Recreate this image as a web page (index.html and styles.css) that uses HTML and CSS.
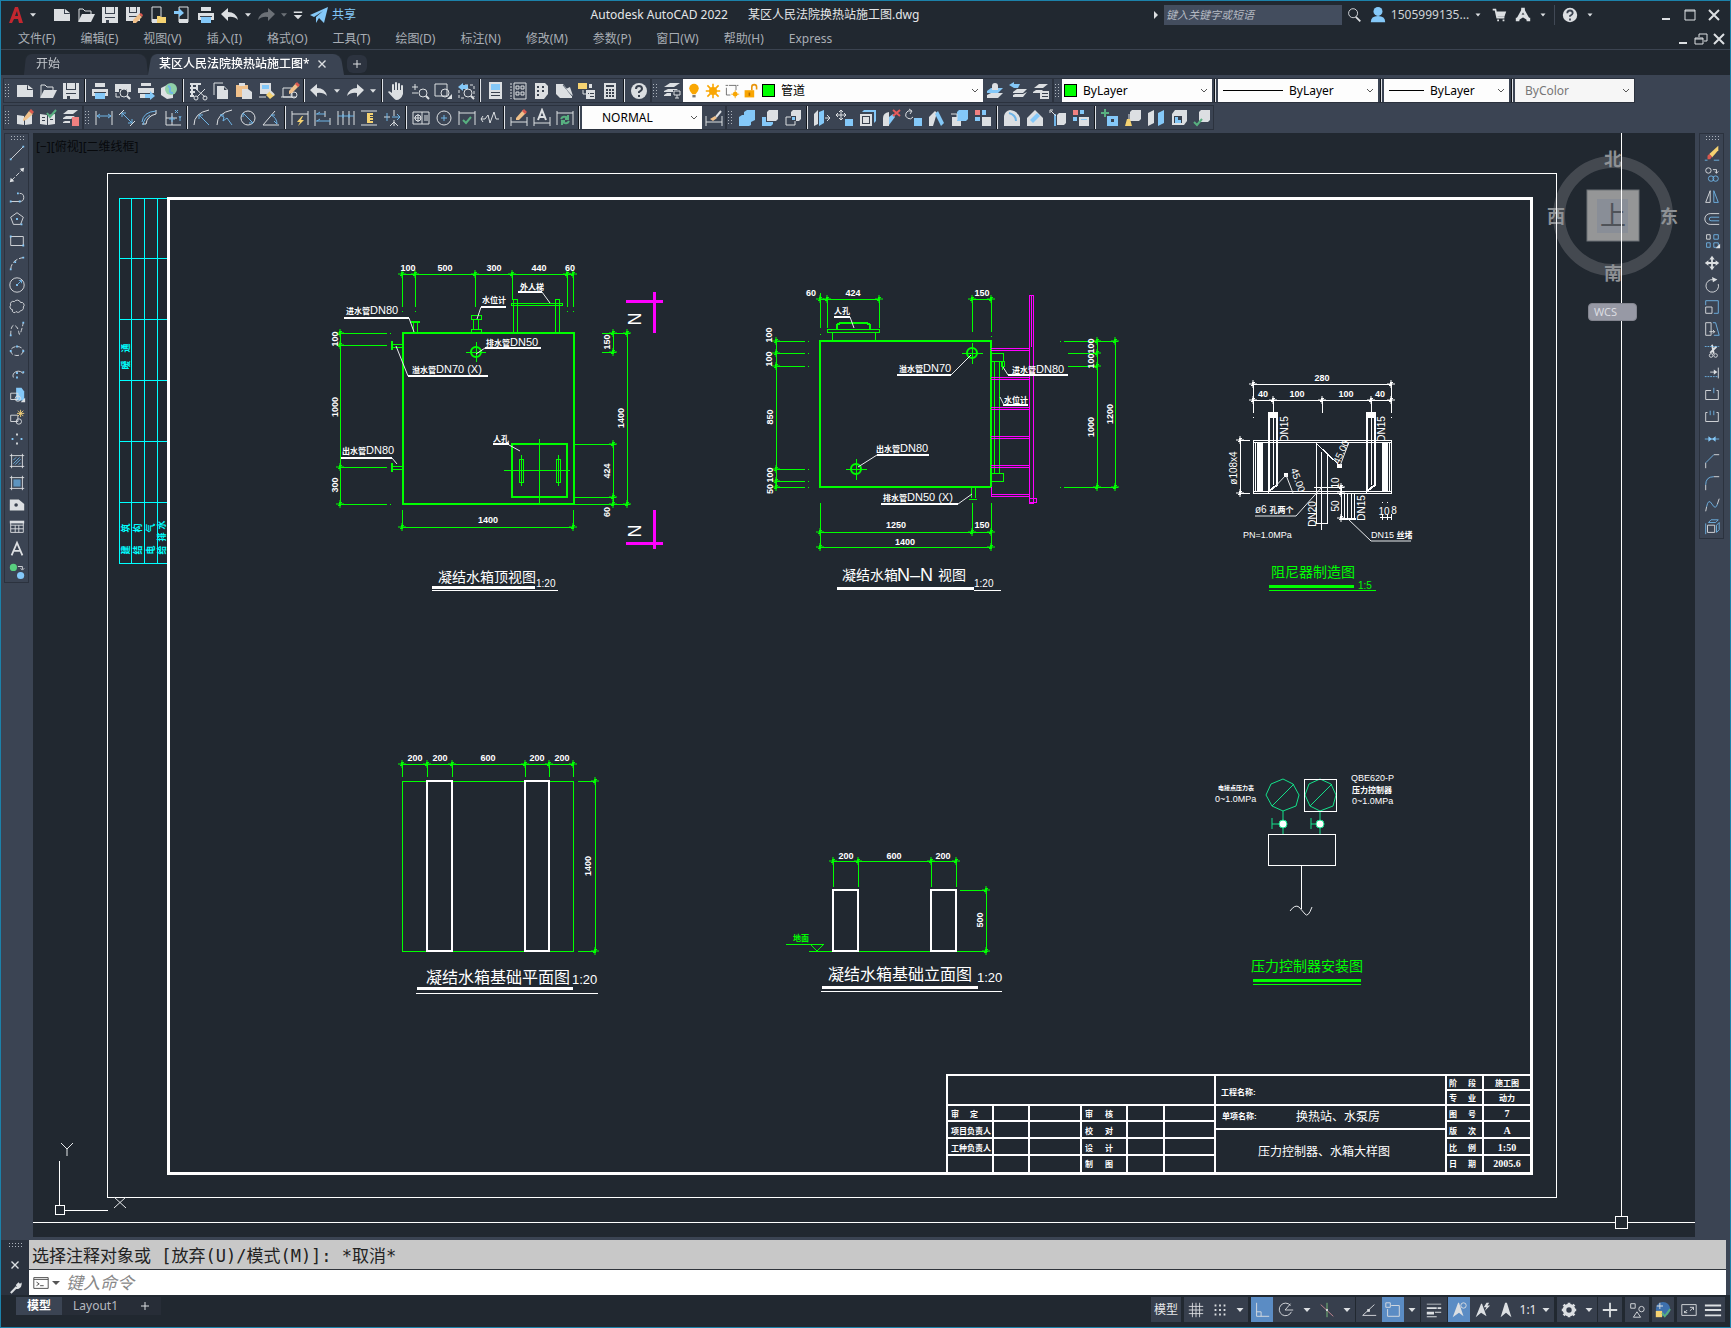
FILE: index.html
```html
<!DOCTYPE html>
<html lang="zh-CN">
<head>
<meta charset="utf-8">
<title>Autodesk AutoCAD 2022 某区人民法院换热站施工图.dwg</title>
<link rel="stylesheet" href="styles.css">
</head>
<body>
<svg class="defs" aria-hidden="true">
<defs>
<symbol id="new" viewBox="0 0 20 20"><path class="W" d="M2 4H12L18 9V16H2Z"/><path class="D" d="M12 4V9H18Z"/><path class="W" d="M13 4L18 8H13Z"/></symbol>
<symbol id="open" viewBox="0 0 20 20"><path class="w" d="M3 16V4H7L9 6H15V9"/><path class="W" d="M6 9H19L15 17H2Z"/></symbol>
<symbol id="save" viewBox="0 0 20 20"><path class="W" d="M2 2H18V18H2Z"/><path class="D" d="M5 2H6V8H14V2H15V9H5ZM5 12H15V13H5ZM6 15H9V18H6Z"/></symbol>
<symbol id="saveas" viewBox="0 0 20 20"><path class="W" d="M2 2H16V16H2Z"/><path class="D" d="M5 2H6V7H12V2H13V8H5ZM5 11H15V12H5Z"/><path class="O" d="M9 15L15 9L18 12L12 18H9Z"/><path class="R" d="M15 9L17 8L19 10L18 12Z"/></symbol>
<symbol id="mobopen" viewBox="0 0 20 20"><path class="w" d="M4 2H13V17H4Z"/><path class="W" d="M4 14H13V18H4Z"/><path class="Y" d="M9 11H12L13 12H18V18H9Z"/></symbol>
<symbol id="mobsave" viewBox="0 0 20 20"><path class="w" d="M7 2H16V17H7Z"/><path class="W" d="M7 14H16V18H7Z"/><path class="B" d="M2 6H7V3L12 8L7 12V9H2Z"/></symbol>
<symbol id="print" viewBox="0 0 20 20"><path class="W" d="M5 2H15V6H5ZM2 8H18V15H2Z"/><path class="D" d="M4 11H16V12H4Z"/><path class="B" d="M5 12H15V18H5Z"/></symbol>
<symbol id="preview" viewBox="0 0 20 20"><path class="W" d="M2 3H18V11H2Z"/><path class="D" d="M6 8H14V16H6Z"/><circle class="w" cx="11" cy="12" r="4"/><path class="w2" d="M14 15L17 18"/><path class="w" d="M3 12V16H7"/></symbol>
<symbol id="publish" viewBox="0 0 20 20"><path class="W" d="M5 2H15V5H5ZM2 7H18V12H2Z"/><path class="W" d="M4 13H11V17H4Z"/><path class="B" d="M9 13H14V10L19 15L14 19V17H9Z"/></symbol>
<symbol id="globe" viewBox="0 0 20 20"><path class="W" d="M2 7L10 3L14 8V17L8 18L2 14Z"/><circle class="G" cx="12" cy="8" r="6"/><path class="b2" d="M9 5Q12 6 11 9T14 12"/></symbol>
<symbol id="cut" viewBox="0 0 20 20"><path class="w2" d="M2 3H13M2 7H10M2 11H7M2 15H6M4 3V15M9 3V9"/><path class="w" d="M8 8L17 16M17 8L9 16"/><circle class="w" cx="8" cy="17" r="2"/><circle class="w" cx="17" cy="17" r="2"/></symbol>
<symbol id="copy" viewBox="0 0 20 20"><path class="w" d="M3 14V2H12"/><path class="W" d="M6 5H13L17 9V18H6Z"/><path class="D" d="M13 6V9H16Z"/></symbol>
<symbol id="paste" viewBox="0 0 20 20"><path class="O" d="M2 4H14V16H2Z"/><path class="W" d="M5 2H11V5H5Z"/><path class="W" d="M8 8H14L18 11V18H8Z"/></symbol>
<symbol id="match" viewBox="0 0 20 20"><path class="W" d="M3 2H14V13H3Z"/><path class="B" d="M5 4H12V8H5Z"/><path class="w" d="M2 16H9"/><path class="Y" d="M9 14L13 10L18 14L13 18Z"/><path class="w2" d="M13 10L17 14"/></symbol>
<symbol id="bedit" viewBox="0 0 20 20"><path class="w" d="M3 16V7H12V16ZM1 16H16"/><circle class="w" cx="14" cy="14" r="3"/><path class="O" d="M9 10L16 2L19 5L12 12L9 13Z"/><path class="R" d="M15 3L17 1L20 4L18 6Z"/></symbol>
<symbol id="undo" viewBox="0 0 20 20"><path class="W" d="M8 3V7Q16 7 18 15Q14 11 8 12V16L1 9Z"/></symbol>
<symbol id="redo" viewBox="0 0 20 20"><path class="W" d="M12 3V7Q4 7 2 15Q6 11 12 12V16L19 9Z"/></symbol>
<symbol id="caret" viewBox="0 0 20 20"><path class="W" d="M5 7H15L10 13Z"/></symbol>
<symbol id="caretbar" viewBox="0 0 20 20"><path class="W" d="M4 5H16V7H4ZM4 10H16L10 16Z"/></symbol>
<symbol id="plane" viewBox="0 0 20 20"><path class="B" d="M1 10L19 2L15 18L10 13L7 18V12L14 6L5 12Z"/></symbol>
<symbol id="pan" viewBox="0 0 20 20"><path d="M6 11V4M9 10V2M12 10V3M15 11V5" fill="none" stroke="#dcdfe2" stroke-width="2" stroke-linecap="round"/><path class="W" d="M5 9H16V13Q14 19 9 19Q7 18 1 11Q2 9 5 12Z"/></symbol>
<symbol id="zoomrt" viewBox="0 0 20 20"><path class="w" d="M2 6H8M5 3V9M2 12H8"/><circle class="w" cx="13" cy="12" r="4"/><path class="w2" d="M16 15L19 18"/></symbol>
<symbol id="zoomwin" viewBox="0 0 20 20"><path class="w" d="M2 3H14V15H2Z"/><circle class="w" cx="12" cy="12" r="4"/><path class="W" d="M14 18H19V13Z"/></symbol>
<symbol id="zoomprev" viewBox="0 0 20 20"><path class="w" stroke-dasharray="3 2" d="M3 9V17H10M9 4H18V16"/><path class="B" d="M2 6L7 2V4H12V8H7V10Z"/><circle class="w" cx="12" cy="12" r="4"/><path class="w2" d="M15 15L18 18"/></symbol>
<symbol id="props" viewBox="0 0 20 20"><path class="W" d="M4 1H17V18H4Z"/><path class="B" d="M6 3H15V9H6Z"/><path class="D" d="M6 11H15V12H6ZM6 14H15V15H6Z"/></symbol>
<symbol id="dc" viewBox="0 0 20 20"><path class="w" stroke-dasharray="2 1" d="M3 2V18"/><path class="w" d="M6 2H18V18H6Z"/><path class="w" d="M8 5H11V8H8ZM13 5H16V8H13ZM8 11H11V14H8ZM13 11H16V14H13Z"/></symbol>
<symbol id="tp" viewBox="0 0 20 20"><path class="W" d="M4 2H14L17 5V13L13 18H4Z"/><path class="D" d="M6 5H8V7H6ZM11 5H13V7H11ZM6 9H8V11H6ZM11 9H13V11H11ZM6 13H8V15H6Z"/></symbol>
<symbol id="ssm" viewBox="0 0 20 20"><path class="W" d="M2 3H9L18 14V17H6L2 13Z"/><path d="M9 4L18 15" stroke="#555f6d"/><path class="W" d="M12 8L16 6L19 15Z"/></symbol>
<symbol id="mkup" viewBox="0 0 20 20"><path class="Y" d="M1 2H10V8H1Z"/><path class="w" d="M6 9V13H9"/><path class="W" d="M12 3H15V7H12ZM9 9H18V18H9Z"/><path class="D" d="M11 12H12V13H11ZM13 12H17V13H13ZM13 15H17V16H13Z"/></symbol>
<symbol id="calc" viewBox="0 0 20 20"><path class="W" d="M4 2H16V18H4Z"/><path class="D" d="M6 4H14V6H6ZM6 8H8V10H6ZM9 8H11V10H9ZM12 8H14V10H12ZM6 11H8V13H6ZM9 11H11V13H9ZM12 11H14V13H12ZM6 14H8V16H6ZM9 14H11V16H9ZM12 14H14V16H12Z"/></symbol>
<symbol id="help" viewBox="0 0 20 20"><circle class="W" cx="10" cy="10" r="8"/><path d="M7 8Q7 5 10 5T13 8Q13 9 10 11V12M10 14V16" fill="none" stroke="#39414e" stroke-width="2"/></symbol>
<symbol id="layers" viewBox="0 0 20 20"><path class="W" d="M2 6L8 2H18L12 6ZM2 10L6 8H16L12 11H2ZM2 14L5 12H9V15H2Z"/><path class="D" d="M11 9H19V19H11Z"/><path class="w" d="M12 10H18V14H12ZM13 17H17M15 14V17"/></symbol>
<symbol id="laycur" viewBox="0 0 20 20"><path class="W" d="M2 14L6 12H18L13 17H2Z"/><path class="B" d="M2 10L6 7H18L13 12H2Z"/><path class="W" d="M7 5A3 3 0 1 1 13 5V9H7Z"/></symbol>
<symbol id="layprev" viewBox="0 0 20 20"><path class="W" d="M5 11L9 8H19L15 12H5ZM5 14L7 13H15L19 11L15 16H5Z"/><path class="B" d="M1 4L6 1V3H12L10 7H6Z"/></symbol>
<symbol id="laystate" viewBox="0 0 20 20"><path class="W" d="M3 7L8 3H17L12 7ZM2 11L5 9H12L9 12H2ZM9 10H18V18H9Z"/><path class="D" d="M11 12H17V13H11ZM11 15H17V16H11Z"/></symbol>
<symbol id="stdedit" viewBox="0 0 20 20"><path class="W" d="M2 7L9 8V17L2 16ZM10 8L17 7V16L10 17Z"/><path class="O" d="M8 11L14 3L18 6L11 12L8 13Z"/><path class="R" d="M14 3L16 1L19 4L17 6Z"/></symbol>
<symbol id="stdchk" viewBox="0 0 20 20"><path class="W" d="M2 6L9 7V17L2 16ZM10 7L17 6V16L10 17Z"/><path class="D" d="M4 9H7V10H4ZM4 12H7V13H4ZM12 11H15V12H12Z"/><path class="g" d="M9 5L12 9L18 2"/></symbol>
<symbol id="laytr" viewBox="0 0 20 20"><path class="W" d="M2 6L7 2H17L12 6ZM2 10L5 8H14L10 11H2ZM2 14L4 13H9V15H2Z"/><path class="P" d="M11 9H18V18H11Z"/></symbol>
<symbol id="dlin" viewBox="0 0 20 20"><path class="w" d="M2 3V17M18 3V17"/><path class="b" d="M3 8H17M3 8L6 6M3 8L6 10M17 8L14 6M17 8L14 10"/></symbol>
<symbol id="dali" viewBox="0 0 20 20"><path class="w" d="M2 7L7 2M13 18L18 13"/><path class="b" d="M5 5L15 15M5 5V9M5 5H9M15 15V11M15 15H11"/></symbol>
<symbol id="darc" viewBox="0 0 20 20"><path class="w" d="M2 16H6M16 2V6M6 16Q7 8 16 6"/><path class="b" d="M2 14Q3 4 16 3M3 17Q4 10 10 7"/></symbol>
<symbol id="dord" viewBox="0 0 20 20"><path class="w" d="M3 3V17H18M3 10H14M9 5V17"/><path class="b" d="M12 2L15 5M15 2L12 5M9 8V14M6 11H12M16 8L17 10L18 8M17 10V13"/></symbol>
<symbol id="drad" viewBox="0 0 20 20"><path class="w" d="M2 17Q2 5 17 2"/><path class="b" d="M7 7L17 17M7 7V11M7 7H11"/></symbol>
<symbol id="djog" viewBox="0 0 20 20"><path class="w" d="M2 17Q2 5 17 2"/><path class="b" d="M5 7L9 9L8 13L12 10L17 17M5 7H9"/></symbol>
<symbol id="ddia" viewBox="0 0 20 20"><circle class="w" cx="10" cy="10" r="7"/><path class="b" d="M5 5L15 15M5 5V9M15 15H11"/></symbol>
<symbol id="dang" viewBox="0 0 20 20"><path class="w" d="M14 3L2 17H18"/><path class="b" d="M10 7Q16 10 16 16M10 7L14 7M16 16L13 13"/></symbol>
<symbol id="dquick" viewBox="0 0 20 20"><path class="w" d="M2 3V17M18 3V17M2 6H18"/><path class="Y" d="M12 8L7 14H10L8 18L14 12H11L13 8Z"/></symbol>
<symbol id="dbase" viewBox="0 0 20 20"><path class="w" d="M2 2V18M12 3V9M17 10V17"/><path class="b" d="M3 6H12M3 13H17M4 13L7 11M4 6L7 4"/></symbol>
<symbol id="dcont" viewBox="0 0 20 20"><path class="w" d="M2 3V17M7 3V17M13 3V17M18 3V17"/><path class="b" d="M2 8H18M7 6V10M13 6V10"/></symbol>
<symbol id="dspace" viewBox="0 0 20 20"><path class="w" d="M2 3H18M2 17H18"/><path class="Y" d="M8 5H14V15H8Z"/><path class="D" d="M11 7H14V8H11ZM11 9H14V10H11ZM11 12H14V13H11Z"/></symbol>
<symbol id="dbreak" viewBox="0 0 20 20"><path class="w" d="M2 9H8M12 2V8M12 12V18M8 18L12 14L16 18"/><path class="b" d="M5 5V13M10 9H18M15 6L18 9L15 12"/></symbol>
<symbol id="dtol" viewBox="0 0 20 20"><path class="w" d="M2 4H18V16H2ZM11 4V16M14 7V13M16 7V13"/><circle class="w" cx="7" cy="10" r="3"/><path class="w" d="M7 6V14M3 10H10"/></symbol>
<symbol id="dcen" viewBox="0 0 20 20"><circle class="w" cx="10" cy="10" r="7"/><path class="b" d="M10 7V13M7 10H13"/></symbol>
<symbol id="dinsp" viewBox="0 0 20 20"><path class="w" d="M2 3V17M18 3V17M2 5H18"/><path class="g" d="M6 12L9 15L14 9"/></symbol>
<symbol id="djl" viewBox="0 0 20 20"><path class="w" d="M1 11H5L8 7L10 15L14 4L16 11H19M3 8L1 11L3 14"/></symbol>
<symbol id="dedit" viewBox="0 0 20 20"><path class="w" d="M2 9V18M18 9V18M2 14H18"/><path class="O" d="M7 10L14 2L17 5L10 12L7 12Z"/><path class="R" d="M13 3L15 1L18 4L16 6Z"/></symbol>
<symbol id="dtedit" viewBox="0 0 20 20"><path class="w" d="M2 9V18M18 9V18M2 15H18"/><path class="w2" d="M6 12L10 2L14 12M7 9H13"/></symbol>
<symbol id="dupd" viewBox="0 0 20 20"><path class="w" d="M2 3V17M18 3V17M2 5H18"/><path class="g" d="M6 11Q8 7 13 10M14 13Q12 17 7 14M13 7V11H10M7 17V13H10"/></symbol>
<symbol id="dstyle" viewBox="0 0 20 20"><path class="w" d="M2 8V18M18 8V18M2 14H18"/><path class="O" d="M6 11L11 8L13 10L9 13Z"/><path class="w2" d="M12 9L17 3"/></symbol>
<symbol id="union" viewBox="0 0 20 20"><path class="B" d="M7 4L10 2H18V12L14 14V17L12 18H2V9L5 7H7Z"/></symbol>
<symbol id="subt" viewBox="0 0 20 20"><path class="W" d="M7 4L9 2H18V11L16 13H7Z"/><path class="B" d="M2 9H6V14H13V16L11 18H2Z"/></symbol>
<symbol id="inter" viewBox="0 0 20 20"><path class="W" d="M8 4L10 2H18V11L16 13H8Z"/><path class="w" d="M3 9H12V17H3Z"/><path class="D" d="M8 8H13V13H8Z"/><path class="B" d="M9 9H12V12H9Z"/></symbol>
<symbol id="extr" viewBox="0 0 20 20"><path class="W" d="M2 6L6 2V16L2 18Z"/><path class="B" d="M7 4L12 2V15L7 18Z"/><path class="w" d="M13 10H18M15 7L18 10L15 13"/></symbol>
<symbol id="fmove" viewBox="0 0 20 20"><path class="w" d="M6 2V12M1 7H11M4 4L6 2L8 4M4 10L6 12L8 10M3 5L1 7L3 9M9 5L11 7L9 9"/><path class="B" d="M10 11H18V18H10Z"/></symbol>
<symbol id="foff" viewBox="0 0 20 20"><path class="W" d="M2 6H14V18H2Z"/><path class="D" d="M4 8H12V16H4Z"/><path class="W" d="M5 9H11V15H5Z"/><path class="B" d="M4 4L6 2H18V13L16 15V4Z"/></symbol>
<symbol id="fdel" viewBox="0 0 20 20"><path class="W" d="M2 10Q2 5 8 4V18H2Z"/><path class="B" d="M8 9L12 6L14 9L8 17Z"/><path d="M12 2L19 8M19 2L12 8" stroke="#e65a5a" stroke-width="2"/></symbol>
<symbol id="frot" viewBox="0 0 20 20"><path class="w" d="M7 3A4 4 0 1 0 9 9M5 1L8 3L6 6"/><path class="B" d="M10 10H18V18H10Z"/></symbol>
<symbol id="ftap" viewBox="0 0 20 20"><path class="W" d="M2 9L8 3L10 5L6 18H2Z"/><path class="B" d="M8 6L11 3L17 15L14 18Z"/></symbol>
<symbol id="fcopy" viewBox="0 0 20 20"><path class="W" d="M2 9H11V18H2Z"/><path class="B" d="M7 4L9 2H18V11L16 13H7Z"/><path class="w" d="M1 6H7V12"/></symbol>
<symbol id="fcol" viewBox="0 0 20 20"><path class="P" d="M2 2H7V7H2Z"/><path class="B" d="M9 2H13V7H9ZM2 9H7V13H2Z"/><path class="W" d="M9 9H18V18H9Z"/></symbol>
<symbol id="ecopy" viewBox="0 0 20 20"><path class="W" d="M2 8Q3 3 8 2Q16 3 18 10V18H2Z"/><path class="b2" d="M7 5Q14 7 14 13"/></symbol>
<symbol id="ecol" viewBox="0 0 20 20"><path class="W" d="M2 10L10 2L18 10V18H2Z"/><path class="B" d="M5 12L12 5L15 8L8 15Z"/></symbol>
<symbol id="impr" viewBox="0 0 20 20"><path class="W" d="M9 7L11 5H18V15L16 17H9Z"/><path class="b2" d="M7 6V18"/><path class="w" d="M2 5V2H5M3 3L8 8"/></symbol>
<symbol id="shell" viewBox="0 0 20 20"><path class="W" d="M8 9H18V18H8Z"/><path class="P" d="M2 2H7V7H2Z"/><path class="B" d="M9 2H13V6H9ZM2 9H6V13H2ZM10 11H16V12H10Z"/></symbol>
<symbol id="plusbox" viewBox="0 0 20 20"><path class="g" d="M5 1V9M1 5H9"/><path class="B" d="M7 8H18V18H7Z"/><path class="D" d="M11 11H14V14H11Z"/></symbol>
<symbol id="clean" viewBox="0 0 20 20"><path class="W" d="M7 4L9 2H18V11L16 13H7Z"/><path class="Y" d="M4 11H7L9 18H2Z"/><path class="w" d="M6 6V11"/></symbol>
<symbol id="separate" viewBox="0 0 20 20"><path class="W" d="M2 5L8 2V15L2 18Z"/><path class="B" d="M12 5L18 2V15L12 18Z"/></symbol>
<symbol id="shell2" viewBox="0 0 20 20"><path class="W" d="M3 6L6 2H18V13L15 17H3Z"/><path class="D" d="M5 8H13V15H5Z"/><path class="B" d="M6 9H9V12H12V15H6Z"/></symbol>
<symbol id="check" viewBox="0 0 20 20"><path class="W" d="M7 4L9 2H18V12L16 14H7Z"/><path class="g" d="M2 14L5 17L10 11"/></symbol>
<symbol id="line" viewBox="0 0 20 20"><path class="w" d="M3 17L17 3"/><path class="B" d="M2 16H4V18H2ZM16 2H18V4H16Z"/></symbol>
<symbol id="xline" viewBox="0 0 20 20"><path class="w" stroke-dasharray="5 2" d="M4 16L16 4"/><path class="W" d="M2 18L3 13L7 17ZM18 2L17 7L13 3Z"/></symbol>
<symbol id="pline" viewBox="0 0 20 20"><path class="w" d="M3 15H13A4 4 0 0 0 13 6"/><path class="B" d="M2 14H4V16H2ZM12 14H14V16H12ZM10 5H12V7H10Z"/></symbol>
<symbol id="polygon" viewBox="0 0 20 20"><path class="w" d="M10 3L17 8L14 16H6L3 8Z"/><path class="B" d="M9 9H11V11H9ZM14 15H16V17H14Z"/></symbol>
<symbol id="rect" viewBox="0 0 20 20"><path class="w" d="M3 5H17V15H3Z"/><path class="B" d="M2 4H4V6H2ZM16 14H18V16H16Z"/></symbol>
<symbol id="arc" viewBox="0 0 20 20"><path class="w" stroke-dasharray="6 2" d="M3 17Q4 6 17 4"/><path class="B" d="M2 16H4V18H2ZM7 8H9V10H7ZM16 3H18V5H16Z"/></symbol>
<symbol id="circle" viewBox="0 0 20 20"><circle class="w" cx="10" cy="10" r="8"/><path class="b" d="M11 9L15 5M12 5H15V8"/><path class="B" d="M9 9H11V11H9Z"/></symbol>
<symbol id="cloud" viewBox="0 0 20 20"><path class="w" d="M5 13A3 3 0 0 1 3 8A3 3 0 0 1 7 4A4 4 0 0 1 14 5A3 3 0 0 1 17 10A3 3 0 0 1 14 14A3 3 0 0 1 9 15A2 2 0 0 1 5 13Z"/></symbol>
<symbol id="spline" viewBox="0 0 20 20"><path class="w" stroke-dasharray="5 2" d="M3 17Q3 5 7 6T12 14T17 3"/><path class="B" d="M2 16H4V18H2ZM16 2H18V4H16Z"/></symbol>
<symbol id="ellipse" viewBox="0 0 20 20"><ellipse class="w" cx="10" cy="10" rx="7" ry="5" stroke-dasharray="5 2"/><path class="B" d="M2 9H4V11H2ZM16 9H18V11H16ZM9 4H11V6H9Z"/></symbol>
<symbol id="ellarc" viewBox="0 0 20 20"><path class="w" d="M6 15A6 5 0 1 1 17 11"/><path class="B" d="M9 9H11V11H9ZM9 14H11V16H9ZM16 8H18V10H16Z"/></symbol>
<symbol id="insert" viewBox="0 0 20 20"><path class="B" d="M9 2H15L18 6V16H9Z"/><path class="w" d="M3 8H11V15H3Z"/><circle class="w" cx="11" cy="14" r="3"/><path class="W" d="M14 18H19V13Z"/></symbol>
<symbol id="mkblock" viewBox="0 0 20 20"><path class="w" d="M3 8H11V15H3Z"/><circle class="w" cx="12" cy="15" r="3"/><path d="M14 2V10M10 6H18M11 3L17 9M17 3L11 9" stroke="#f6d27a"/></symbol>
<symbol id="point" viewBox="0 0 20 20"><path class="W" d="M9 4H11V6H9ZM9 14H11V16H9Z"/><path class="B" d="M4 9H6V11H4ZM14 9H16V11H14Z"/></symbol>
<symbol id="hatch" viewBox="0 0 20 20"><path class="w" d="M4 2V18M16 2V18M2 4H18M2 16H18"/><path class="b" d="M6 9L9 6M6 13L13 6M8 14L14 8M12 14L14 12"/></symbol>
<symbol id="grad" viewBox="0 0 20 20"><path class="w" d="M4 2V18M16 2V18M2 4H18M2 16H18"/><path fill="#5d94bf" d="M6 6H14V14H6Z"/></symbol>
<symbol id="region" viewBox="0 0 20 20"><path class="W" d="M2 4H12L18 9V16H2Z"/><circle class="D" cx="9" cy="10" r="2"/></symbol>
<symbol id="table" viewBox="0 0 20 20"><path class="w" d="M3 4H17V16H3ZM3 8H17M3 12H17M8 8V16M12 8V16"/><path class="W" d="M2 3H18V6H2Z"/></symbol>
<symbol id="mtext" viewBox="0 0 20 20"><path class="w2" d="M4 17L10 3L16 17M6 12H14"/></symbol>
<symbol id="addsel" viewBox="0 0 20 20"><circle cx="6" cy="6" r="4" fill="#58cf7f"/><circle class="B" cx="14" cy="15" r="4"/><path class="w" d="M11 5H16V8M14 7L16 9L18 7"/></symbol>
<symbol id="erase" viewBox="0 0 20 20"><path class="Y" d="M7 11L17 2V7L10 15Z"/><path class="R" d="M5 13L7 11L10 14L8 17H5Z"/><path class="b" d="M2 18H5M12 18H18"/></symbol>
<symbol id="ccopy" viewBox="0 0 20 20"><circle class="w" cx="6" cy="5" r="3"/><path class="w" d="M11 4H15V8M13 6L15 8L17 6"/><circle class="b" cx="9" cy="14" r="3"/><circle class="b" cx="14" cy="14" r="3"/></symbol>
<symbol id="mirror" viewBox="0 0 20 20"><path class="w" d="M8 3V16H3Z"/><path class="b" d="M12 3V16H17Z"/></symbol>
<symbol id="offset" viewBox="0 0 20 20"><path class="w" d="M18 4H8A6 6 0 0 0 8 16H18"/><path class="b" d="M18 8H9A2 2 0 0 0 9 12H18"/></symbol>
<symbol id="array" viewBox="0 0 20 20"><path class="w" d="M4 3H8V8H4Z"/><path class="b" d="M12 3H17V8H12ZM4 12H8V17H4ZM12 12H17V17H12Z"/><path class="W" d="M14 18H19V13Z"/></symbol>
<symbol id="move" viewBox="0 0 20 20"><path class="w2" d="M10 4V16M4 10H16"/><path class="W" d="M10 2L13 6H7ZM10 18L13 14H7ZM2 10L6 7V13ZM18 10L14 7V13Z"/></symbol>
<symbol id="rotate" viewBox="0 0 20 20"><path class="w" d="M11 4A7 7 0 1 0 17 9"/><path class="W" d="M10 1L16 4L11 7Z"/></symbol>
<symbol id="scale" viewBox="0 0 20 20"><path class="b" d="M3 8V3H17V17H12"/><path class="w" d="M3 10H10V17H3Z"/></symbol>
<symbol id="stretch" viewBox="0 0 20 20"><path class="w" d="M3 3H9V17H3ZM7 13H13M11 11L13 13L11 15"/><path class="b" d="M11 3L14 3L18 17H12"/></symbol>
<symbol id="trim" viewBox="0 0 20 20"><path class="w2" d="M10 3L12 13M15 5L8 12"/><circle class="w" cx="9" cy="15" r="2"/><circle class="w" cx="14" cy="15" r="2"/><path class="b" stroke-dasharray="2 1" d="M2 5H18"/></symbol>
<symbol id="extend" viewBox="0 0 20 20"><path class="w" d="M17 4V16M8 9H14"/><path class="W" d="M12 6L16 9L12 12Z"/><path class="b" stroke-dasharray="2 1" d="M2 14H16"/></symbol>
<symbol id="breakpt" viewBox="0 0 20 20"><path class="w" d="M9 5H3V15H17V5H15"/><path class="b" d="M12 2V8"/></symbol>
<symbol id="break2" viewBox="0 0 20 20"><path class="w" d="M5 5H3V15H17V5H15"/><path class="b" d="M8 3V8M12 3V8"/></symbol>
<symbol id="join" viewBox="0 0 20 20"><path class="b" d="M2 10H18"/><path class="B" d="M6 7L10 10L6 13ZM14 7L10 10L14 13Z"/></symbol>
<symbol id="chamfer" viewBox="0 0 20 20"><path class="w" d="M3 18V12M12 3H18"/><path class="b" d="M3 12L12 3"/></symbol>
<symbol id="fillet" viewBox="0 0 20 20"><path class="w" d="M3 18V12M12 3H18"/><path class="b" d="M3 12Q3 3 12 3"/></symbol>
<symbol id="blend" viewBox="0 0 20 20"><path class="b" d="M4 12Q6 2 10 9T16 9"/><path class="w" d="M3 17L4 12M16 9L18 3"/></symbol>
<symbol id="explode" viewBox="0 0 20 20"><path class="w" d="M5 8H13V16H5Z"/><path class="b" d="M3 6V18M6 5L9 2H17L14 5ZM15 8L18 5V13L15 16Z"/></symbol>
<symbol id="search" viewBox="0 0 20 20"><circle class="w" cx="9" cy="8" r="5"/><path class="w2" d="M12 12L17 17"/></symbol>
<symbol id="user" viewBox="0 0 20 20"><circle class="B" cx="10" cy="6" r="5"/><path class="B" d="M2 18Q2 11 10 11T18 18Z"/></symbol>
<symbol id="cart" viewBox="0 0 20 20"><path class="w2" d="M3 4H6L8 13H16"/><path class="W" d="M7 6H18L16 12H8ZM8 15H10V17H8ZM14 15H16V17H14Z"/></symbol>
<symbol id="adsk" viewBox="0 0 20 20"><path class="w3" d="M10 4L4 15M10 4L16 15M5 14L10 11L15 14"/><path class="W" d="M8 2H12V6H8ZM2 13H6V17H2ZM14 13H18V17H14Z"/></symbol>
<symbol id="winmin" viewBox="0 0 20 20"><path class="W" d="M6 13H14V15H6Z"/></symbol>
<symbol id="winmax" viewBox="0 0 20 20"><path class="w" d="M5 5H15V15H5ZM5 6H15"/></symbol>
<symbol id="winrest" viewBox="0 0 20 20"><path class="w" d="M8 8V5H16V12H13M4 9H12V15H4ZM4 10H12"/></symbol>
<symbol id="winx" viewBox="0 0 20 20"><path class="w2" d="M5 5L15 15M15 5L5 15"/></symbol>
<symbol id="grid" viewBox="0 0 20 20"><path class="w" d="M6 2V18M10 2V18M14 2V18M2 6H18M2 10H18M2 14H18"/></symbol>
<symbol id="snap" viewBox="0 0 20 20"><path class="w2" stroke-dasharray="2 3" d="M4 5H17M4 10H17M4 15H17"/></symbol>
<symbol id="ortho" viewBox="0 0 20 20"><path class="w" d="M4 2V17H18M4 12H9V17"/></symbol>
<symbol id="polar" viewBox="0 0 20 20"><path class="w" d="M15 5A7 7 0 1 0 16 12M18 10H9L15 3"/></symbol>
<symbol id="iso" viewBox="0 0 20 20"><path d="M10 2V18" stroke="#7bc47b"/><path d="M3 4L17 17" stroke="#c98a94"/><path class="W" d="M9 9H11V11H9Z"/></symbol>
<symbol id="otrack" viewBox="0 0 20 20"><path class="w" d="M16 4L3 16H18"/><path class="W" d="M8 9H11V12H8Z"/></symbol>
<symbol id="osnap" viewBox="0 0 20 20"><path class="w" d="M8 5H17V17H4V9M2 2H7V7H2Z"/></symbol>
<symbol id="lwt" viewBox="0 0 20 20"><path class="W" d="M2 3H18V4H2ZM2 7H13V9H2ZM14 7H18V9H14ZM2 12H10V15H2ZM11 12H18V13H11ZM2 17H13V18H2Z"/></symbol>
<symbol id="anno" viewBox="0 0 20 20"><path class="W" d="M9 2H10L15 17L10 13L3 18Z"/><circle class="w" cx="15" cy="5" r="3"/></symbol>
<symbol id="annoauto" viewBox="0 0 20 20"><path class="W" d="M9 3H10L15 17L9 13L3 18ZM15 2L12 7H15L13 11L19 5H16L18 2Z"/></symbol>
<symbol id="annosc" viewBox="0 0 20 20"><path class="W" d="M9 2H11L16 18L10 13L4 18Z"/></symbol>
<symbol id="gear" viewBox="0 0 20 20"><circle cx="10" cy="10" r="5" fill="none" stroke="#dcdfe2" stroke-width="4"/><path d="M10 2V5M10 15V18M2 10H5M15 10H18M4 4L6 6M14 14L16 16M16 4L14 6M4 16L6 14" stroke="#dcdfe2" stroke-width="3"/></symbol>
<symbol id="plus" viewBox="0 0 20 20"><path class="w2" d="M10 2V18M2 10H18"/></symbol>
<symbol id="shapes" viewBox="0 0 20 20"><path class="w" d="M3 3H8V8H3ZM10 12L14 18H6Z"/><circle class="w" cx="15" cy="9" r="3"/></symbol>
<symbol id="gfx" viewBox="0 0 20 20"><circle cx="10" cy="9" r="8" fill="#3d70ad"/><path class="W" d="M6 2H7V5H10V6H7V9H6V6H3V5H6Z"/><path class="Y" d="M2 11H9V18H2Z"/><path class="g" d="M9 13L12 17L18 9"/></symbol>
<symbol id="full" viewBox="0 0 20 20"><path class="w" d="M2 4H18V16H2ZM11 7H15V10M15 7L11 11M5 11V13H8M5 13L8 10"/></symbol>
<symbol id="menu" viewBox="0 0 20 20"><path class="W" d="M1 4H19V6H1ZM1 9H19V11H1ZM1 15H19V17H1Z"/></symbol>
<symbol id="wrench" viewBox="0 0 20 20"><path d="M4 17L12 9" stroke="#dcdfe2" stroke-width="3"/><path d="M16 3L13 6L14 8L18 5A5 5 0 0 1 10 9" fill="none" stroke="#dcdfe2" stroke-width="3"/></symbol>
<symbol id="prompt" viewBox="0 0 20 20"><path d="M2 4H18V16H2ZM2 6H18M5 9L8 11L5 13M9 13H13" fill="none" stroke="#444"/></symbol>
<symbol id="bulb" viewBox="0 0 20 20"><path fill="#f9a602" d="M4 7A6 6 0 1 1 16 7Q16 10 12 14H8Q4 10 4 7Z"/><path fill="#777" d="M8 15H12V18H8Z"/></symbol>
<symbol id="sun" viewBox="0 0 20 20"><circle cx="10" cy="10" r="5" fill="#f9a602"/><path d="M10 1V19M1 10H19M3 3L17 17M17 3L3 17" stroke="#f9a602" stroke-width="2"/></symbol>
<symbol id="vpf" viewBox="0 0 20 20"><path d="M3 6V15H8M6 3H15V9M2 3H5M16 3H18" fill="none" stroke="#555"/><circle cx="14" cy="14" r="3" fill="#f9a602"/><path d="M14 9V19M9 14H19" stroke="#f9a602"/></symbol>
<symbol id="lock" viewBox="0 0 20 20"><path d="M11 9V5A3 3 0 0 1 17 5V8" fill="none" stroke="#e8940a" stroke-width="2"/><path fill="#f9a602" d="M2 9H14V18H2Z"/><path fill="#b46c00" d="M7 12H9V16H7Z"/></symbol>
<marker id="tg" markerUnits="userSpaceOnUse" markerWidth="10" markerHeight="10" refX="5" refY="5" orient="0"><path d="M5 1V9M1 5H9M3 7L7 3" stroke="#0f0" stroke-width="1" fill="none"/><path d="M4 3H6V7H4Z" fill="#0f0"/></marker>
<marker id="tw" markerUnits="userSpaceOnUse" markerWidth="10" markerHeight="10" refX="5" refY="5" orient="0"><path d="M5 1V9M1 5H9M3 7L7 3" stroke="#fff" stroke-width="1" fill="none"/><path d="M4 3H6V7H4Z" fill="#fff"/></marker>
</defs>
</svg>
<div class="app">
<header class="titlebar">
  <div class="qat">
    <button class="logo" aria-label="应用程序菜单"><svg viewBox="0 0 20 20"><path d="M3 18L9 2H12L17 18H13L12 14H8L6 18Z" fill="#c3272f"/><path d="M9 11H12L11 6Z" fill="#212830"/></svg></button><button class="drop" aria-label="菜单"><svg><use href="#caret"/></svg></button>
    <button aria-label="新建"><svg><use href="#new"/></svg></button><button aria-label="打开"><svg><use href="#open"/></svg></button><button aria-label="保存"><svg><use href="#save"/></svg></button><button aria-label="另存为"><svg><use href="#saveas"/></svg></button><button aria-label="从移动端打开"><svg><use href="#mobopen"/></svg></button><button aria-label="保存到移动端"><svg><use href="#mobsave"/></svg></button><button aria-label="打印"><svg><use href="#print"/></svg></button><button aria-label="放弃"><svg><use href="#undo"/></svg></button><button class="drop" aria-label="放弃列表"><svg><use href="#caret"/></svg></button><button class="dim-ic" aria-label="重做"><svg><use href="#redo"/></svg></button><button class="drop dim-ic" aria-label="重做列表"><svg><use href="#caret"/></svg></button><button class="bar" aria-label="自定义"><svg><use href="#caretbar"/></svg></button>
    <button class="share"><svg><use href="#plane"/></svg>共享</button>
  </div>
  <h1><span>Autodesk AutoCAD 2022</span><span>某区人民法院换热站施工图.dwg</span></h1>
  <div class="info">
    <span class="tri"></span>
    <input class="search" type="text" placeholder="键入关键字或短语" aria-label="搜索">
    <button aria-label="搜索"><svg><use href="#search"/></svg></button><button aria-label="用户"><svg><use href="#user"/></svg></button>
    <button class="acct">1505999135...</button><button class="drop" aria-label="账户"><svg><use href="#caret"/></svg></button>
    <button class="cart" aria-label="购物车"><svg><use href="#cart"/></svg></button><button aria-label="应用"><svg><use href="#adsk"/></svg></button><button class="drop" aria-label="应用列表"><svg><use href="#caret"/></svg></button>
    <span class="vline"></span>
    <button class="hlp" aria-label="帮助"><svg><use href="#help"/></svg></button><button class="drop" aria-label="帮助列表"><svg><use href="#caret"/></svg></button>
  </div>
  <div class="win"><button aria-label="最小化"><svg><use href="#winmin"/></svg></button><button aria-label="最大化"><svg><use href="#winmax"/></svg></button><button aria-label="关闭"><svg><use href="#winx"/></svg></button></div>
</header>
<nav class="menubar">
  <a href="#">文件(F)</a><a href="#">编辑(E)</a><a href="#">视图(V)</a><a href="#">插入(I)</a><a href="#">格式(O)</a><a href="#">工具(T)</a><a href="#">绘图(D)</a><a href="#">标注(N)</a><a href="#">修改(M)</a><a href="#">参数(P)</a><a href="#">窗口(W)</a><a href="#">帮助(H)</a><a href="#">Express</a>
  <div class="mdi"><button aria-label="最小化图形"><svg><use href="#winmin"/></svg></button><button aria-label="还原图形"><svg><use href="#winrest"/></svg></button><button aria-label="关闭图形"><svg><use href="#winx"/></svg></button></div>
</nav>
<div class="tabs">
  <button class="tab start">开始</button>
  <div class="tab active"><span>某区人民法院换热站施工图*</span><button aria-label="关闭选项卡"><svg><use href="#winx"/></svg></button></div>
  <button class="newtab" aria-label="新图形"><svg><use href="#plus"/></svg></button>
</div>
<div class="bars">
  <div class="barrow">
    <div class="tb"><i class="grip"></i>
      <button aria-label="新建"><svg><use href="#new"/></svg></button><button aria-label="打开"><svg><use href="#open"/></svg></button><button aria-label="保存"><svg><use href="#save"/></svg></button><i class="sep"></i>
      <button aria-label="打印"><svg><use href="#print"/></svg></button><button aria-label="打印预览"><svg><use href="#preview"/></svg></button><button aria-label="发布"><svg><use href="#publish"/></svg></button><button aria-label="三维打印"><svg><use href="#globe"/></svg></button><i class="sep"></i>
      <button aria-label="剪切"><svg><use href="#cut"/></svg></button><button aria-label="复制"><svg><use href="#copy"/></svg></button><button aria-label="粘贴"><svg><use href="#paste"/></svg></button><button aria-label="特性匹配"><svg><use href="#match"/></svg></button><button aria-label="块编辑器"><svg><use href="#bedit"/></svg></button><i class="sep"></i>
      <button aria-label="放弃"><svg><use href="#undo"/></svg></button><button class="drop" aria-label="放弃列表"><svg><use href="#caret"/></svg></button><button aria-label="重做"><svg><use href="#redo"/></svg></button><button class="drop" aria-label="重做列表"><svg><use href="#caret"/></svg></button><i class="sep"></i>
      <button aria-label="平移"><svg><use href="#pan"/></svg></button><button aria-label="实时缩放"><svg><use href="#zoomrt"/></svg></button><button aria-label="窗口缩放"><svg><use href="#zoomwin"/></svg></button><button aria-label="缩放上一个"><svg><use href="#zoomprev"/></svg></button><i class="sep"></i>
      <button aria-label="特性"><svg><use href="#props"/></svg></button><button aria-label="设计中心"><svg><use href="#dc"/></svg></button><button aria-label="工具选项板"><svg><use href="#tp"/></svg></button><button aria-label="图纸集"><svg><use href="#ssm"/></svg></button><button aria-label="标记集"><svg><use href="#mkup"/></svg></button><button aria-label="计算器"><svg><use href="#calc"/></svg></button><i class="sep"></i>
      <button aria-label="帮助"><svg><use href="#help"/></svg></button>
    </div>
    <div class="tb"><i class="grip"></i>
      <button aria-label="图层特性"><svg><use href="#layers"/></svg></button>
      <div class="combo c-layer"><svg><use href="#bulb"/></svg><svg><use href="#sun"/></svg><svg><use href="#vpf"/></svg><svg><use href="#lock"/></svg><i class="swatch"></i><select aria-label="图层"><option>管道</option></select></div>
      <button aria-label="置为当前"><svg><use href="#laycur"/></svg></button><button aria-label="上一个图层"><svg><use href="#layprev"/></svg></button><button aria-label="图层状态"><svg><use href="#laystate"/></svg></button>
    </div>
    <div class="tb"><i class="grip"></i>
      <div class="combo c-color"><i class="swatch"></i><select aria-label="颜色"><option>ByLayer</option></select></div><i class="sep"></i>
      <div class="combo c-ltype"><i class="sample"></i><select aria-label="线型"><option>ByLayer</option></select></div><i class="sep"></i>
      <div class="combo c-lwt"><i class="sample"></i><select aria-label="线宽"><option>ByLayer</option></select></div><i class="sep"></i>
      <div class="combo c-plot"><select aria-label="打印样式" disabled><option>ByColor</option></select></div>
    </div>
  </div>
  <div class="barrow">
    <div class="tb"><i class="grip"></i>
      <button aria-label="配置标准"><svg><use href="#stdedit"/></svg></button><button aria-label="检查标准"><svg><use href="#stdchk"/></svg></button><button aria-label="图层转换"><svg><use href="#laytr"/></svg></button>
    </div>
    <div class="tb"><i class="grip"></i>
      <button aria-label="线性"><svg><use href="#dlin"/></svg></button><button aria-label="对齐"><svg><use href="#dali"/></svg></button><button aria-label="弧长"><svg><use href="#darc"/></svg></button><button aria-label="坐标"><svg><use href="#dord"/></svg></button><i class="sep"></i>
      <button aria-label="半径"><svg><use href="#drad"/></svg></button><button aria-label="折弯"><svg><use href="#djog"/></svg></button><button aria-label="直径"><svg><use href="#ddia"/></svg></button><button aria-label="角度"><svg><use href="#dang"/></svg></button><i class="sep"></i>
      <button aria-label="快速标注"><svg><use href="#dquick"/></svg></button><button aria-label="基线"><svg><use href="#dbase"/></svg></button><button aria-label="连续"><svg><use href="#dcont"/></svg></button><button aria-label="等距"><svg><use href="#dspace"/></svg></button><button aria-label="打断"><svg><use href="#dbreak"/></svg></button><i class="sep"></i>
      <button aria-label="公差"><svg><use href="#dtol"/></svg></button><button aria-label="圆心标记"><svg><use href="#dcen"/></svg></button><button aria-label="检验"><svg><use href="#dinsp"/></svg></button><button aria-label="折弯线性"><svg><use href="#djl"/></svg></button><i class="sep"></i>
      <button aria-label="编辑标注"><svg><use href="#dedit"/></svg></button><button aria-label="编辑文字"><svg><use href="#dtedit"/></svg></button><button aria-label="标注更新"><svg><use href="#dupd"/></svg></button><i class="sep"></i>
      <div class="combo c-dim"><select aria-label="标注样式"><option>NORMAL</option></select></div>
      <button aria-label="标注样式管理"><svg><use href="#dstyle"/></svg></button>
    </div>
    <div class="tb"><i class="grip"></i>
      <button aria-label="并集"><svg><use href="#union"/></svg></button><button aria-label="差集"><svg><use href="#subt"/></svg></button><button aria-label="交集"><svg><use href="#inter"/></svg></button><i class="sep"></i>
      <button aria-label="拉伸面"><svg><use href="#extr"/></svg></button><button aria-label="移动面"><svg><use href="#fmove"/></svg></button><button aria-label="偏移面"><svg><use href="#foff"/></svg></button><button aria-label="删除面"><svg><use href="#fdel"/></svg></button><button aria-label="旋转面"><svg><use href="#frot"/></svg></button><button aria-label="倾斜面"><svg><use href="#ftap"/></svg></button><button aria-label="复制面"><svg><use href="#fcopy"/></svg></button><button aria-label="着色面"><svg><use href="#fcol"/></svg></button><i class="sep"></i>
      <button aria-label="复制边"><svg><use href="#ecopy"/></svg></button><button aria-label="着色边"><svg><use href="#ecol"/></svg></button><button aria-label="压印"><svg><use href="#impr"/></svg></button><button aria-label="着色"><svg><use href="#shell"/></svg></button><i class="sep"></i>
      <button aria-label="压印边"><svg><use href="#plusbox"/></svg></button><button aria-label="清除"><svg><use href="#clean"/></svg></button><button aria-label="分割"><svg><use href="#separate"/></svg></button><button aria-label="抽壳"><svg><use href="#shell2"/></svg></button><button aria-label="检查"><svg><use href="#check"/></svg></button>
    </div>
  </div>
</div>
<main class="work">
  <div class="side left"><div class="vtb"><i class="grip"></i>
    <button aria-label="直线"><svg><use href="#line"/></svg></button><button aria-label="构造线"><svg><use href="#xline"/></svg></button><button aria-label="多段线"><svg><use href="#pline"/></svg></button><button aria-label="多边形"><svg><use href="#polygon"/></svg></button><button aria-label="矩形"><svg><use href="#rect"/></svg></button><button aria-label="圆弧"><svg><use href="#arc"/></svg></button><button aria-label="圆"><svg><use href="#circle"/></svg></button><button aria-label="修订云线"><svg><use href="#cloud"/></svg></button><button aria-label="样条曲线"><svg><use href="#spline"/></svg></button><button aria-label="椭圆"><svg><use href="#ellipse"/></svg></button><button aria-label="椭圆弧"><svg><use href="#ellarc"/></svg></button><button aria-label="插入块"><svg><use href="#insert"/></svg></button><button aria-label="创建块"><svg><use href="#mkblock"/></svg></button><button aria-label="点"><svg><use href="#point"/></svg></button><button aria-label="图案填充"><svg><use href="#hatch"/></svg></button><button aria-label="渐变色"><svg><use href="#grad"/></svg></button><button aria-label="面域"><svg><use href="#region"/></svg></button><button aria-label="表格"><svg><use href="#table"/></svg></button><button aria-label="多行文字"><svg><use href="#mtext"/></svg></button><button aria-label="添加选定对象"><svg><use href="#addsel"/></svg></button>
  </div></div>
  <div class="canvas">
<svg class="dwg" viewBox="33 133 1662 1104" preserveAspectRatio="xMinYMin meet">
<text x="36" y="151" class="vp">[−][俯视][二维线框]</text>
<!-- view cube -->
<g opacity="0.9"><circle cx="1613" cy="216" r="54" fill="none" stroke="#484d54" stroke-width="12"/>
<rect x="1587" y="190" width="52" height="51" fill="#a2a3a3" stroke="#777a7e"/><rect x="1597" y="199" width="31" height="34" fill="#959aa3"/>
<text x="1613" y="216" class="cube up">上</text>
<text x="1613" y="160" class="cube">北</text><text x="1613" y="274" class="cube">南</text><text x="1556" y="217" class="cube">西</text><text x="1669" y="217" class="cube">东</text></g>
<!-- sheet borders -->
<path class="l w1" d="M107 173H1556V1197H107Z"/>
<path class="l w1 k3" d="M168 198H1531V1173H168Z"/>
<g class="l cy"><path d="M167 198H119V563H167M131 198V563M144 198V563M157 198V563M119 258H167M119 319H167M119 380H167M119 441H167M119 502H167"/></g>
<g class="ct"><text transform="translate(126 365) rotate(-90)">暖</text><text transform="translate(126 348) rotate(-90)">通</text>
<text transform="translate(126 550) rotate(-90)">建</text><text transform="translate(126 528) rotate(-90)">筑</text><text transform="translate(138 550) rotate(-90)">结</text><text transform="translate(138 528) rotate(-90)">构</text><text transform="translate(151 550) rotate(-90)">电</text><text transform="translate(151 528) rotate(-90)">气</text><text transform="translate(162 550) rotate(-90)">给</text><text transform="translate(162 537) rotate(-90)">排</text><text transform="translate(162 525) rotate(-90)">水</text></g>

<!-- tank, top view -->
<g class="l gr">
<path class="k2" d="M403 333H574V504H403Z"/><path class="k2" d="M512 444H567V497H512Z"/>
<path class="dm" d="M402 274H415H475H512H567H573"/><path d="M402 274V307M415 274V307M475 274V307M512 274V300M567 274V307M573 274V307M402 311V312M415 311V312M567 311V312M573 311V312"/>
<path class="dm" d="M340 333V345V467V504"/><path d="M340 333H387M340 345H387M340 467H387M340 504H387M390 333H391M390 504H391"/>
<path class="dm" d="M613 333V352"/><path class="dm" d="M627 333V504"/><path class="dm" d="M613 444V497V504"/><path d="M602 333H630M602 352H616M573 444H616M573 497H616M573 504H630"/>
<path class="dm" d="M402 527H573"/><path d="M402 510V527M573 510V527"/>
<path d="M391 341V350M392 341V350M392 344H402M392 347H402M391 463V472M392 463V472M392 466H402M392 469H402"/>
<path d="M411 321H420M411 322H420M413 322V333M417 322V333M471 315H481V319H471ZM473 319V329M478 319V329M471 333V329H481V333"/>
<path d="M511 303H562V305H511ZM513 333V299H517V333M555 333V299H559V333"/>
<path d="M466 352H486M476 342V362M539 439V504M504 470H570M519 459H523V482H519ZM521 455V486M556 459H560V482H556ZM558 455V486"/>
</g>
<circle class="g2" cx="476" cy="352" r="5"/>
<g class="l w1 k2"><path d="M344 318H409M481 307H506M518 292H542M485 348H541M408 376H488M493 444H509M341 458H392"/></g>
<path class="ld" d="M409 318L414 332M481 307L477 319M542 292L550 303M485 348L476 354M408 376L396 346M509 445L520 451M392 458L397 464"/>
<g class="lb"><text x="346" y="314">进水管<tspan>DN80</tspan></text><text x="482" y="303">水位计</text><text x="520" y="290">外人梯</text><text x="486" y="346">排水管<tspan>DN50</tspan></text><text x="412" y="373">溢水管<tspan>DN70 (X)</tspan></text><text x="493" y="442">人孔</text><text x="342" y="454">出水管<tspan>DN80</tspan></text></g>
<g class="dt"><text x="408" y="268">100</text><text x="445" y="268">500</text><text x="494" y="268">300</text><text x="539" y="268">440</text><text x="570" y="268">60</text><text x="488" y="520">1400</text>
<text transform="translate(335 339) rotate(-90)">100</text><text transform="translate(335 407) rotate(-90)">1000</text><text transform="translate(335 485) rotate(-90)">300</text><text transform="translate(607 342) rotate(-90)">150</text><text transform="translate(621 418) rotate(-90)">1400</text><text transform="translate(607 471) rotate(-90)">424</text><text transform="translate(607 512) rotate(-90)">60</text></g>
<g class="l mg k3"><path d="M626 301H663M654 292V333M626 543H663M654 510V549"/></g>
<g class="nn"><text transform="translate(635 319) rotate(-90)">N</text><text transform="translate(635 531) rotate(-90)">N</text></g>
<text class="ti s14" x="438" y="582">凝结水箱顶视图</text><text class="sc" x="536" y="587">1:20</text>
<path class="l w1 k3" d="M432 587H535"/><path class="l w1" d="M432 590H558"/>

<!-- tank, N-N view -->
<g class="l gr">
<path class="k2" d="M820 341H991V487H820Z"/>
<path class="dm" d="M820 299H827H879"/><path class="dm" d="M972 299H991"/><path d="M820 293V328M827 299V328M879 299V328M972 299V332M991 299V332M820 334V335M991 336V337"/>
<path d="M827 329H879V332H827ZM832 332V341M875 332V341"/><path class="k2" d="M837 329V325L840 323H867L870 325V329"/>
<path class="dm" d="M776 341V353V366V469V481V487"/><path d="M776 341H805M776 353H805M776 366H805M776 469H805M776 481H805M776 487H805M808 341H809M808 353H809M808 366H809M808 469H809M808 481H809M808 487H809"/>
<path d="M962 353H983M972 343V364M846 469H867M856 459V480M971 487V498M975 487V498M969 499H977M991 353H1003V361H991M994 361V473M999 361V473M991 473H1003V481H991M1001 361V366H1004V361M1002 361V370"/>
<path class="dm" d="M1097 341V353V366V487"/><path class="dm" d="M1115 341V487"/><path d="M1064 341H1118M1068 353H1098M1068 366H1098M1064 487H1118M1060 341H1061M1060 487H1061"/>
<path class="dm" d="M820 532H972H991"/><path class="dm" d="M820 547H991"/><path d="M820 503V547M972 503V532M991 503V547"/>
</g>
<circle class="g2" cx="972" cy="353" r="5"/><circle class="g2" cx="856" cy="469" r="5"/>
<g class="l mg"><path d="M1029 295H1033V503H1029ZM1031 295V347M991 348H1029M991 350H1029M991 377H1029M991 379H1029M991 407H1029M991 409H1029M991 436H1029M991 438H1029M991 465H1029M991 467H1029M991 487V496M991 494H1029M991 496H1029M1030 498H1036V502H1030"/></g>
<g class="l w1 k2"><path d="M834 317H850M897 375H951M877 455H929M881 504H958M1008 375H1068M1003 405H1028"/></g>
<path class="ld" d="M850 317L854 328M951 375L971 355M877 455L858 467M958 504L972 494M1008 375L1003 367M1004 405L1000 397"/>
<g class="lb"><text x="834" y="314">人孔</text><text x="899" y="372">溢水管<tspan>DN70</tspan></text><text x="876" y="452">出水管<tspan>DN80</tspan></text><text x="883" y="501">排水管<tspan>DN50 (X)</tspan></text><text x="1012" y="373">进水管<tspan>DN80</tspan></text><text x="1004" y="403">水位计</text></g>
<g class="dt"><text x="811" y="293">60</text><text x="853" y="293">424</text><text x="982" y="293">150</text><text x="896" y="525">1250</text><text x="982" y="525">150</text><text x="905" y="542">1400</text>
<text transform="translate(769 335) rotate(-90)">100</text><text transform="translate(769 359) rotate(-90)">100</text><text transform="translate(770 417) rotate(-90)">850</text><text transform="translate(770 475) rotate(-90)">100</text><text transform="translate(770 489) rotate(-90)">50</text><text transform="translate(1091 346) rotate(-90)">100</text><text transform="translate(1091 361) rotate(-90)">100</text><text transform="translate(1091 427) rotate(-90)">1000</text><text transform="translate(1110 414) rotate(-90)">1200</text></g>
<text class="ti s14" x="842" y="580">凝结水箱</text><text class="ti thin s18" x="897" y="581">N–N</text><text class="ti s14" x="938" y="580">视图</text><text class="sc" x="974" y="587">1:20</text>
<path class="l w1 k3" d="M837 588H974"/><path class="l w1" d="M974 590H1001"/>

<!-- damper -->
<g class="l wh">
<path class="dw" d="M1253 384H1391"/><path class="dw" d="M1253 400H1273H1322H1371H1391"/><path d="M1253 384V413M1391 384V413M1273 400V412M1322 400V413M1371 400V412M1253 417V418M1391 417V418"/>
<path d="M1253 440H1391V493H1253ZM1253 442H1391M1253 491H1391M1255 442V491M1389 442V491"/>
<path class="k2" d="M1269 413H1277V485L1269 491ZM1367 413H1375V485L1367 491Z"/><path d="M1273 418V485M1371 418V485"/>
<path d="M1316 443V523H1327V453M1321 452V530M1316 443L1340 466M1344 493V518H1354V493M1347 493V518M1351 493V518M1341 518H1356M1341 519H1356"/>
<path class="dw" d="M1240 440V493"/><path d="M1240 440H1250M1240 493H1250"/><path class="dw" d="M1341 487V493V518"/><path d="M1314 487H1344"/>
<path d="M1380 517H1392M1382 514V520M1387 514V520M1391 514V520M1382 502V503M1387 502V503"/>
</g>
<g fill="#fff"><path d="M1257 442H1263V491H1257ZM1382 442H1388V491H1382ZM1269 413H1277V418H1269ZM1367 413H1375V418H1367ZM1337 464H1342V468H1337ZM1284 473H1288V477H1284Z"/></g>
<path class="ld" d="M1272 490L1286 475L1293 493M1340 466L1349 442M1296 516L1322 487M1255 516H1296M1348 519L1371 541H1411"/>
<g class="dt"><text x="1322" y="378">280</text><text x="1263" y="394">40</text><text x="1297" y="394">100</text><text x="1346" y="394">100</text><text x="1380" y="394">40</text></g>
<g class="dl"><text transform="translate(1284 429) rotate(-90)">DN15</text><text transform="translate(1381 429) rotate(-90)">DN15</text><text transform="translate(1233 468) rotate(-90)">ø108x4</text><text transform="translate(1312 514) rotate(-90)">DN20</text><text transform="translate(1335 506) rotate(-90)">50</text><text transform="translate(1335 483) rotate(-90)">10</text><text transform="translate(1361 508) rotate(-90)">DN15</text><text transform="translate(1298 480) rotate(70)">45.00</text><text transform="translate(1341 452) rotate(-65)">45.00</text><text x="1384" y="511">10</text><text x="1394" y="510">8</text></g>
<g class="lb"><text x="1255" y="513"><tspan class="n10">ø6 </tspan>孔两个</text><text x="1243" y="538"><tspan class="n9">PN=1.0MPa</tspan></text><text x="1371" y="538"><tspan class="n9">DN15 </tspan>丝堵</text></g>
<text class="ti s14 gt" x="1271" y="577">阻尼器制造图</text><text class="sc gt" x="1358" y="589">1:5</text>
<path class="l gr k3" d="M1269 586H1354"/><path class="l gr" d="M1269 590H1376"/>

<!-- foundation plan -->
<g class="l gr"><path d="M402 781H573V951H402Z"/><path class="dm" d="M402 764H427H452H525H549H573"/><path d="M402 764V777M427 764V777M452 764V777M525 764V777M549 764V777M573 764V777M578 781H595M578 951H595"/><path class="dm" d="M595 781V951"/></g>
<path class="l w1 k2" d="M427 781H452V951H427ZM525 781H549V951H525Z"/>
<g class="dt"><text x="415" y="758">200</text><text x="440" y="758">200</text><text x="488" y="758">600</text><text x="537" y="758">200</text><text x="562" y="758">200</text><text transform="translate(588 866) rotate(-90)">1400</text></g>
<text class="ti s16" x="426" y="983">凝结水箱基础平面图</text><text class="sc s13" x="572" y="984">1:20</text>
<path class="l w1 k3" d="M417 988H573"/><path class="l w1" d="M416 993H598"/>

<!-- foundation elevation -->
<g class="l gr"><path d="M809 951H988M786 944H824"/><path class="dm" d="M833 861H858H931H956"/><path d="M833 861V887M858 861V887M931 861V887M956 861V887M960 890H986"/><path class="dm" d="M986 890V951"/></g>
<path class="g1" d="M811 945L817 951L823 945"/>
<path class="l w1 k2" d="M833 890H858V951H833ZM931 890H956V951H931Z"/>
<g class="dt"><text x="846" y="856">200</text><text x="894" y="856">600</text><text x="943" y="856">200</text><text transform="translate(980 920) rotate(-90)">500</text></g>
<g class="lb"><text class="gt" x="793" y="941">地面</text></g>
<text class="ti s16" x="828" y="980">凝结水箱基础立面图</text><text class="sc s13" x="977" y="982">1:20</text>
<path class="l w1 k3" d="M822 987H978"/><path class="l w1" d="M821 991H1002"/>

<!-- pressure controller -->
<g class="tl"><path d="M1283 779L1293 784L1299 795L1296 806L1283 811L1272 806L1266 795L1271 784ZM1272 806L1294 784M1283 811V834M1272 818V829M1272 824H1279"/><path d="M1320 779L1331 784L1336 795L1333 806L1320 811L1310 806L1305 795L1309 784ZM1310 806L1332 784M1320 811V834M1311 818V829M1311 824H1317"/><circle cx="1283" cy="824" r="4" fill="#fff"/><circle cx="1320" cy="824" r="4" fill="#fff"/></g>
<path class="l wh" d="M1304 779H1336V811H1304ZM1268 834H1335V865H1268ZM1301 865V909"/>
<path class="ld" d="M1290 911Q1295 904 1299 907L1305 914Q1308 918 1312 907"/>
<g class="lb"><text class="s6" x="1218" y="790">电接点压力表</text><text x="1215" y="802"><tspan class="n9">0~1.0MPa</tspan></text><text x="1351" y="781"><tspan class="n9">QBE620-P</tspan></text><text x="1352" y="793">压力控制器</text><text x="1352" y="804"><tspan class="n9">0~1.0MPa</tspan></text></g>
<text class="ti s14 gt" x="1251" y="971">压力控制器安装图</text>
<path class="l gr k3" d="M1253 980H1361"/><path class="l gr" d="M1253 984H1361"/>

<!-- title block -->
<g class="l w1 k2"><path d="M947 1173V1075H1531M947 1105H1531M1215 1075V1173M1446 1075V1173M1483 1075V1173M993 1105V1173M1029 1105V1173M1081 1105V1173M1127 1105V1173M1164 1105V1173M947 1121H1215M947 1138H1215M947 1155H1215M1215 1129H1446M1446 1090H1531M1446 1121H1531M1446 1138H1531M1446 1155H1531"/></g>
<g class="lb"><text x="951" y="1117">审</text><text x="970" y="1117">定</text><text x="951" y="1134">项目负责人</text><text x="951" y="1151">工种负责人</text>
<text x="1085" y="1117">审</text><text x="1105" y="1117">核</text><text x="1085" y="1134">校</text><text x="1105" y="1134">对</text><text x="1085" y="1151">设</text><text x="1105" y="1151">计</text><text x="1085" y="1167">制</text><text x="1105" y="1167">图</text>
<text x="1221" y="1095">工程名称:</text><text x="1222" y="1119">单项名称:</text>
<text x="1449" y="1086">阶</text><text x="1468" y="1086">段</text><text x="1449" y="1101">专</text><text x="1468" y="1101">业</text><text x="1449" y="1117">图</text><text x="1468" y="1117">号</text><text x="1449" y="1134">版</text><text x="1468" y="1134">次</text><text x="1449" y="1151">比</text><text x="1468" y="1151">例</text><text x="1449" y="1167">日</text><text x="1468" y="1167">期</text></g>
<text class="ti s12" x="1296" y="1121">换热站、水泵房</text><text class="ti s12" x="1258" y="1156">压力控制器、水箱大样图</text>
<g class="vl"><text x="1507" y="1086">施工图</text><text x="1507" y="1101">动力</text><text class="sf" x="1507" y="1117">7</text><text class="sf" x="1507" y="1134">A</text><text class="sf" x="1507" y="1151">1:50</text><text class="sf" x="1507" y="1167">2005.6</text></g>

<!-- UCS icon and crosshair -->
<path class="l wh" d="M59 1161V1205M64 1210H108M55 1205H64V1214H55Z"/><path class="ld" d="M61 1143L67 1149L73 1143M67 1149V1156M114 1197L126 1208M126 1197L114 1208"/>
<path class="l wh" d="M1621 133V1216M33 1222H1615M1628 1222H1695M1615 1216H1627V1228H1615Z"/>
</svg>
<button class="wcs">WCS</button>
  </div>
  <div class="side right"><div class="vtb"><i class="grip"></i>
    <button aria-label="删除"><svg><use href="#erase"/></svg></button><button aria-label="复制"><svg><use href="#ccopy"/></svg></button><button aria-label="镜像"><svg><use href="#mirror"/></svg></button><button aria-label="偏移"><svg><use href="#offset"/></svg></button><button aria-label="阵列"><svg><use href="#array"/></svg></button><button aria-label="移动"><svg><use href="#move"/></svg></button><button aria-label="旋转"><svg><use href="#rotate"/></svg></button><button aria-label="缩放"><svg><use href="#scale"/></svg></button><button aria-label="拉伸"><svg><use href="#stretch"/></svg></button><button aria-label="修剪"><svg><use href="#trim"/></svg></button><button aria-label="延伸"><svg><use href="#extend"/></svg></button><button aria-label="打断于点"><svg><use href="#breakpt"/></svg></button><button aria-label="打断"><svg><use href="#break2"/></svg></button><button aria-label="合并"><svg><use href="#join"/></svg></button><button aria-label="倒角"><svg><use href="#chamfer"/></svg></button><button aria-label="圆角"><svg><use href="#fillet"/></svg></button><button aria-label="光顺曲线"><svg><use href="#blend"/></svg></button><button aria-label="分解"><svg><use href="#explode"/></svg></button>
  </div></div>
</main>
<section class="cmd">
  <div class="cmdtools"><i class="grip"></i><button aria-label="关闭"><svg><use href="#winx"/></svg></button><button aria-label="自定义"><svg><use href="#wrench"/></svg></button></div>
  <div class="cmdbox">
    <p class="hist">选择注释对象或 [放弃(U)/模式(M)]: *取消*</p>
    <div class="entry"><button aria-label="最近使用的命令"><svg><use href="#prompt"/></svg><i class="chev"></i></button><input type="text" placeholder="键入命令" aria-label="命令"></div>
  </div>
</section>
<footer class="status">
  <div class="layouts"><button class="on">模型</button><button>Layout1</button><button class="add" aria-label="新建布局"><svg><use href="#plus"/></svg></button></div>
  <div class="sgs">
    <div class="sg"><button class="mod">模型</button></div>
    <div class="sg"><button aria-label="栅格"><svg><use href="#grid"/></svg></button><button aria-label="捕捉"><svg><use href="#snap"/></svg></button><button class="cr" aria-label="捕捉选项"><svg><use href="#caret"/></svg></button></div>
    <div class="sg"><button class="on" aria-label="正交"><svg><use href="#ortho"/></svg></button><button class="wd" aria-label="极轴"><svg><use href="#polar"/></svg></button><button class="cr" aria-label="极轴选项"><svg><use href="#caret"/></svg></button><button aria-label="等轴测"><svg><use href="#iso"/></svg></button><button class="cr" aria-label="等轴测选项"><svg><use href="#caret"/></svg></button><i></i><button class="wd" aria-label="对象捕捉追踪"><svg><use href="#otrack"/></svg></button><button class="on" aria-label="对象捕捉"><svg><use href="#osnap"/></svg></button><button class="cr" aria-label="对象捕捉选项"><svg><use href="#caret"/></svg></button><i></i><button class="wd" aria-label="线宽"><svg><use href="#lwt"/></svg></button><i></i><button class="on" aria-label="注释可见性"><svg><use href="#anno"/></svg></button><button aria-label="自动缩放"><svg><use href="#annoauto"/></svg></button><button aria-label="注释比例"><svg><use href="#annosc"/></svg></button><button class="ratio">1:1</button><button class="cr" aria-label="比例选项"><svg><use href="#caret"/></svg></button></div>
    <div class="sg"><button aria-label="工作空间"><svg><use href="#gear"/></svg></button><button class="cr" aria-label="工作空间选项"><svg><use href="#caret"/></svg></button><i></i><button aria-label="注释监视器"><svg><use href="#plus"/></svg></button></div>
    <div class="sg"><button aria-label="隔离对象"><svg><use href="#shapes"/></svg></button></div>
    <div class="sg"><button class="on2" aria-label="图形性能"><svg><use href="#gfx"/></svg></button></div>
    <div class="sg"><button aria-label="全屏"><svg><use href="#full"/></svg></button><button aria-label="自定义"><svg><use href="#menu"/></svg></button></div>
  </div>
</footer>
</div>
</body>
</html>
```
FILE: styles.css
```css
* { box-sizing: border-box; }
html, body { height: 100%; }
body {
  margin: 0;
  background: #212830;
  color: #d0d4d8;
  font: 12px/16px "Noto Sans", "Noto Sans CJK SC", sans-serif;
}
button {
  display: flex; align-items: center; justify-content: center;
  margin: 0; padding: 0; border: 0; background: none;
  color: inherit; font: inherit; white-space: nowrap;
}
button svg { width: 20px; height: 20px; flex: none; }
.defs { position: absolute; width: 0; height: 0; }

.app {
  display: flex; flex-direction: column;
  height: 100vh; min-width: 1280px;
  border: 1px solid #1c82aa;
  overflow: hidden;
}

/* icon paints */
.W { fill: #dcdfe2; } .B { fill: #84c8f8; } .D { fill: #39414e; } .Y { fill: #f5d271; }
.O { fill: #f0c08a; } .R { fill: #d8584f; } .P { fill: #f08080; } .G { fill: #8fd0a8; }
.w, .w2, .w3, .b, .b2, .g { fill: none; }
.w { stroke: #dcdfe2; } .w2 { stroke: #dcdfe2; stroke-width: 2; } .w3 { stroke: #dcdfe2; stroke-width: 3; }
.b { stroke: #6fb4e6; } .b2 { stroke: #6fb4e6; stroke-width: 2; } .g { stroke: #58b080; stroke-width: 2; }

/* title bar */
.titlebar { display: flex; align-items: center; height: 27px; flex: none; }
.qat { display: flex; align-items: center; padding-left: 3px; }
.qat button { width: 24px; }
.qat .drop { width: 12px; } .qat .bar { width: 16px; }
.drop svg { width: 12px; height: 12px; }
.bar svg { width: 14px; height: 14px; }
.qat .drop:nth-child(2) { width: 22px; padding-right: 12px; }
.qat .dim-ic { opacity: 0.4; }
.qat .share { width: auto; gap: 3px; padding-left: 3px; color: #84c8f8; }
.titlebar h1 { display: flex; gap: 20px; margin: 0 auto; color: #e4e6e8; font-size: 12px; font-weight: 400; white-space: nowrap; }
.info { display: flex; align-items: center; }
.tri { width: 0; margin-right: 6px; border: 4px solid transparent; border-left-color: #dcdfe2; border-right: 0; }
.search {
  width: 178px; height: 20px; padding: 0 2px;
  border: 0; background: #434d5e; color: #fff;
  font: italic 11px/16px "Noto Sans", "Noto Sans CJK SC", sans-serif;
}
.search::placeholder { color: #b4b9c2; }
.info button { width: 24px; }
.info svg { width: 18px; height: 18px; }
.info .drop { width: 16px; } .info .drop svg { width: 10px; height: 10px; }
.info .acct { width: 80px; }
.info .cart { margin-left: 1px; }
.vline { width: 1px; height: 20px; margin: 0 3px; background: #414955; }
.win { display: flex; width: 132px; justify-content: flex-end; padding-right: 4px; }
.win button { width: 24px; }

/* menu bar */
.menubar { display: flex; align-items: center; gap: 25px; height: 22px; flex: none; padding: 0 0 0 17px; border-bottom: 1px solid #3b4350; }
.menubar a { color: #a9aeb5; text-decoration: none; white-space: nowrap; }
.mdi { display: flex; margin-left: auto; padding-right: 2px; }
.mdi button { width: 18px; }

/* file tabs */
.tabs { display: flex; align-items: flex-end; height: 25px; flex: none; padding-left: 23px; }
.tab { position: relative; display: flex; align-items: center; height: 22px; padding: 0 11px; z-index: 0; color: #c3c7cc; }
.tab::before { content: ""; position: absolute; inset: 0; z-index: -1; border-radius: 6px 8px 0 0; background: #2c333f; transform: perspective(60px) rotateX(6deg); transform-origin: bottom; }
.start { width: 124px; justify-content: flex-start; padding-left: 12px; }
.active { width: 196px; padding-left: 11px; gap: 5px; color: #fff; font-weight: 500; white-space: nowrap; }
.active::before { background: #3b4453; }
.tab svg { width: 14px; height: 14px; }
.newtab { width: 20px; height: 18px; margin: 0 0 2px 3px; border-radius: 6px; background: #2c333f; }
.newtab svg { width: 10px; height: 10px; }

/* toolbars */
.bars { flex: none; display: flex; flex-direction: column; gap: 2px; padding: 3px 0 3px 2px; height: 58px; background: #3b4453; }
.barrow { display: flex; }
.tb { display: flex; align-items: stretch; height: 25px; border: 1px solid #2b323e; }
.tb > button { width: 23px; }
.tb > .drop { width: 13px; }
.grip { width: 9px; flex: none; margin: 4px 0; background: radial-gradient(circle, #aeb4bd 1px, transparent 1px) 0 0 / 3px 3px; background-clip: content-box; padding: 0 2px 0 1px; }
.tb + .tb .grip { width: 8px; }
.sep { width: 6px; flex: none; background: linear-gradient(90deg, transparent 2px, #12161c 2px, #12161c 3px, #e0e3e7 3px, #e0e3e7 4px, transparent 4px); }
.combo { display: flex; align-items: center; gap: 3px; background: #fdfdfd; color: #000; padding: 0 5px; }
.combo svg { width: 16px; height: 16px; flex: none; }
.combo select {
  flex: 1; min-width: 0; height: 100%; padding: 0 0 0 3px; border: 0; appearance: none;
  font: inherit; color: #000;
  background: url("data:image/svg+xml,%3Csvg xmlns='http://www.w3.org/2000/svg' width='9' height='6'%3E%3Cpath d='M1 1L4 4L7 1' fill='none' stroke='%23555'/%3E%3C/svg%3E") right center no-repeat;
}
.combo select:disabled { color: #777; opacity: 1; }
.swatch { width: 13px; height: 13px; flex: none; border: 1px solid #000; background: #0f0; }
.sample { height: 1px; background: #000; flex: none; }
.c-layer { width: 300px; padding-right: 3px; padding-left: 3px; } .c-color { width: 150px; padding-left: 2px; padding-right: 3px; }
.c-ltype { width: 160px; padding-right: 3px; } .c-ltype .sample { width: 60px; }
.c-lwt { width: 125px; padding-right: 3px; } .c-lwt .sample { width: 35px; }
.c-plot { width: 119px; padding-left: 7px; padding-right: 3px; background: #f6f6f6; }
.c-dim { width: 120px; padding-left: 17px; padding-right: 3px; }

/* work area */
.work { display: flex; flex: 1; min-height: 0; background: #3b4453; }
.side { flex: none; }
.side.left { width: 32px; padding-left: 3px; }
.side.right { width: 35px; padding-left: 4px; }
.vtb { display: flex; flex-direction: column; width: 25px; border: 1px solid #2b323e; }
.vtb .grip { width: 14px; height: 6px; margin: 1px 5px; padding: 0; }
.vtb button { height: 22px; }
.vtb svg { width: 18px; height: 18px; }
.canvas { position: relative; flex: 1; min-width: 0; overflow: hidden; background: #212830; }
.dwg { display: block; width: 100%; height: 100%; }
.wcs {
  position: absolute; top: 170px; right: 58px; width: 49px; height: 18px;
  justify-content: flex-start; padding-left: 5px;
  border: 1px solid #83858f; border-radius: 4px; background: #9799a5; color: #dcdde2; font-size: 11px;
}

/* drawing */
.l { fill: none; stroke-width: 1; shape-rendering: crispEdges; }
.w1, .wh { stroke: #fff; } .gr { stroke: #0f0; } .cy { stroke: #0ff; } .mg { stroke: #f0f; }
.k2 { stroke-width: 2; } .k3 { stroke-width: 3; }
.dm { marker: url(#tg); } .dw { marker: url(#tw); }
.g1 { fill: none; stroke: #0f0; } .g2 { fill: none; stroke: #0f0; stroke-width: 2; }
.tl { fill: none; stroke: #14e08a; }
.ld { fill: none; stroke: #e8eaec; }
.dwg text { fill: #fff; font-family: "Liberation Sans", "Noto Sans CJK SC", sans-serif; }
.dwg .vp { fill: #07090c; font: 12px "Noto Sans", "Noto Sans CJK SC", sans-serif; }
.dwg .cube { fill: #9a9da0; font-size: 18px; font-weight: 700; text-anchor: middle; dominant-baseline: central; }
.dwg .up { fill: #54585e; font-size: 26px; font-weight: 400; }
.dwg .ct text { fill: #0ff; font-size: 9px; font-weight: 700; text-anchor: middle; dominant-baseline: central; }
.dt text { font-size: 9px; font-weight: 700; text-anchor: middle; dominant-baseline: central; }
.dl text { font-size: 10px; text-anchor: middle; dominant-baseline: central; }
.lb text { font-size: 8px; font-weight: 700; }
.lb tspan { font-size: 11px; font-weight: 400; }
.lb .n10 { font-size: 10px; } .lb .n9 { font-size: 9px; } .lb .s6 { font-size: 6px; }
.nn text { font-size: 18px; text-anchor: middle; dominant-baseline: central; }
.sc { font-size: 10px; } .s12 { font-size: 12px; } .s13 { font-size: 13px; } .s14 { font-size: 14px; } .s16 { font-size: 16px; } .s18 { font-size: 18px; }
.vl text { font-size: 8px; font-weight: 700; text-anchor: middle; }
.dwg .sf { font: 700 10px "Liberation Serif", serif; }
.dwg .gt { fill: #0f0; }

/* command line */
.cmd { display: flex; flex: none; height: 58px; padding: 3px 4px 0 0; background: #3b4453; }
.cmdtools { display: flex; flex-direction: column; align-items: center; justify-content: space-between; width: 28px; background: #2b323e; }
.cmdtools .grip { width: 15px; height: 6px; margin: 2px 0 0; padding: 0; }
.cmdtools svg { width: 14px; height: 14px; }
.cmdbox { flex: 1; display: flex; flex-direction: column; background: #fff; color: #222; font: 17px/24px "DejaVu Sans Mono", "Noto Sans CJK SC", monospace; }
.hist { margin: 0; height: 30px; padding: 4px 3px 2px; border-bottom: 1px solid #30353c; background: #c8c8c8; white-space: nowrap; overflow: hidden; }
.entry { display: flex; flex: 1; align-items: center; padding-left: 3px; }
.entry button { width: 32px; justify-content: flex-start; gap: 2px; }
.entry svg { width: 18px; height: 18px; }
.chev { border: 4px solid transparent; border-top-color: #555; border-bottom: 0; }
.entry input { flex: 1; height: 24px; border: 0; padding: 0 2px; background: none; font: italic 17px/24px "Noto Sans", "Noto Sans CJK SC", sans-serif; }
.entry input::placeholder { color: #888; }

/* status bar */
.status { display: flex; justify-content: space-between; flex: none; height: 32px; padding: 2px 5px 0 15px; }
.layouts { display: flex; height: 18px; }
.layouts button { padding: 0 11px; color: #b6bac0; background: #272d37; }
.layouts .on { color: #fff; font-weight: 700; background: #3b4453; }
.layouts svg { width: 10px; height: 10px; }
.sgs { display: flex; gap: 3px; height: 25px; }
.sg { display: flex; background: #373f4d; }
.sg button { width: 24px; color: #e6e8ea; }
.sg svg { width: 18px; height: 18px; }
.sg .mod { width: 30px; }
.sg .on { width: 22px; background: #5b8cc4; }
.sg .on2 { width: 22px; }
.sg .wd { width: 26px; }
.sg .cr { width: 16px; }
.sg .cr svg { width: 14px; height: 14px; }
.sg .ratio { width: 20px; }
.sg i { width: 1px; background: #212830; }
```
